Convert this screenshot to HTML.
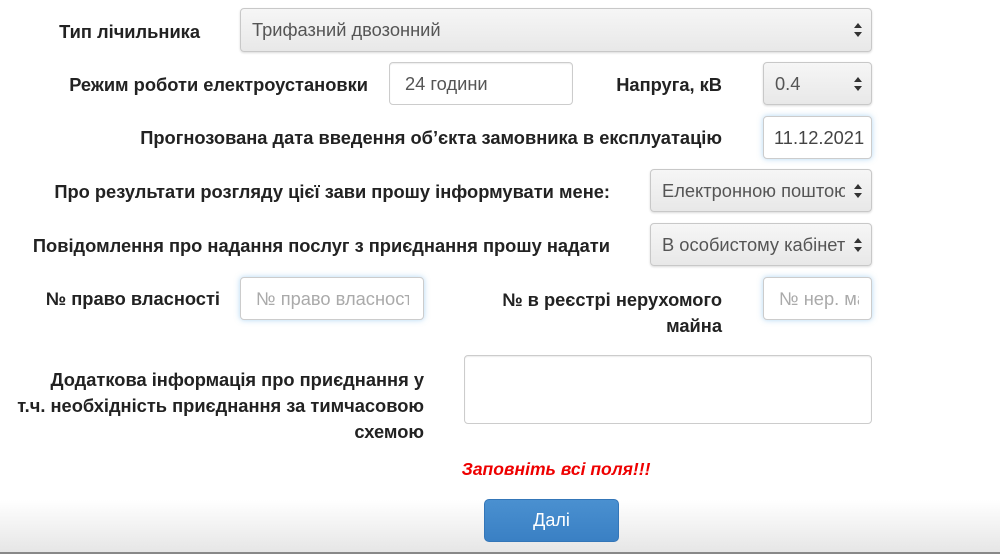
<!DOCTYPE html>
<html><head><meta charset="utf-8"><style>
body{margin:0;width:1000px;height:554px;position:relative;overflow:hidden;background:#fff;font-family:"Liberation Sans",sans-serif;}
.bg{position:absolute;left:0;right:0;top:500px;height:52px;background:linear-gradient(#fff,#e6e6e6);}
.bl{position:absolute;left:0;right:0;top:552px;height:2px;background:#888;}
.l{position:absolute;font-weight:bold;font-size:18.3px;color:#222;text-align:right;line-height:26px;white-space:nowrap;}
.b{position:absolute;box-sizing:border-box;border:1px solid #ccc;border-radius:4px;background:#fff;font-size:18.3px;color:#555;padding-left:15px;display:flex;align-items:center;box-shadow:inset 0 1px 1px rgba(0,0,0,.075);overflow:hidden;white-space:nowrap;}
.s{background:linear-gradient(#f6f6f6,#e8e8e8);border-color:#c8c8c8;box-shadow:0 1px 2px rgba(0,0,0,.15);padding-left:11px;}
.s:after{content:"";position:absolute;right:9px;top:50%;margin-top:-7px;width:0;height:0;border-left:4px solid transparent;border-right:4px solid transparent;border-bottom:5px solid #333;}
.s:before{content:"";position:absolute;right:9px;top:50%;margin-top:2px;width:0;height:0;border-left:4px solid transparent;border-right:4px solid transparent;border-top:5px solid #333;}
.c{position:absolute;left:0;top:0;bottom:0;overflow:hidden;display:flex;align-items:center;white-space:nowrap;}
.g{box-shadow:0 0 6px rgba(102,175,233,.5);}
.p{color:#aaa;}
</style></head><body>
<div class="bg"></div><div class="bl"></div>
<div class="l" style="right:800px;top:19px">Тип лічильника</div>
<div class="b s" style="left:240px;top:8px;width:632px;height:44px">Трифазний двозонний</div>
<div class="l" style="right:632px;top:72px">Режим роботи електроустановки</div>
<div class="b" style="left:389px;top:62px;width:184px;height:43px">24 години</div>
<div class="l" style="right:278px;top:72px">Напруга, кВ</div>
<div class="b s" style="left:763px;top:62px;width:109px;height:43px">0.4</div>
<div class="l" style="right:278px;top:125px">Прогнозована дата введення об’єкта замовника в експлуатацію</div>
<div class="b g" style="left:763px;top:116px;width:109px;height:43px;padding-left:10px;color:#444">11.12.2021</div>
<div class="l" style="right:390px;top:179px">Про результати розгляду цієї зави прошу інформувати мене:</div>
<div class="b s" style="left:650px;top:169px;width:222px;height:43px"><span class="c" style="left:11px;width:183px">Електронною поштою</span></div>
<div class="l" style="right:390px;top:233px">Повідомлення про надання послуг з приєднання прошу надати</div>
<div class="b s" style="left:650px;top:223px;width:222px;height:43px"><span class="c" style="left:11px;width:183px">В особистому кабінеті</span></div>
<div class="l" style="right:780px;top:286px">№ право власності</div>
<div class="b g p" style="left:240px;top:277px;width:184px;height:43px"><span class="c" style="left:15px;width:153px">№ право власності</span></div>
<div class="l" style="right:278px;top:287px">№ в реєстрі нерухомого<br>майна</div>
<div class="b g p" style="left:763px;top:277px;width:109px;height:43px"><span class="c" style="left:15px;width:80px">№ нер. майна</span></div>
<div class="l" style="right:576px;top:367px">Додаткова інформація про приєднання у<br>т.ч. необхідність приєднання за тимчасовою<br>схемою</div>
<div class="b" style="left:464px;top:355px;width:408px;height:69px"></div>
<div style="position:absolute;left:456px;top:459px;width:200px;text-align:center;color:#e00;font-weight:bold;font-style:italic;font-size:17.5px">Заповніть всі поля!!!</div>
<div style="position:absolute;left:484px;top:499px;width:135px;height:43px;border-radius:5px;background:linear-gradient(#4a90d0,#3a80c4);border:1px solid #3476b8;box-sizing:border-box;color:#fff;font-size:18px;display:flex;align-items:center;justify-content:center">Далі</div>
</body></html>
